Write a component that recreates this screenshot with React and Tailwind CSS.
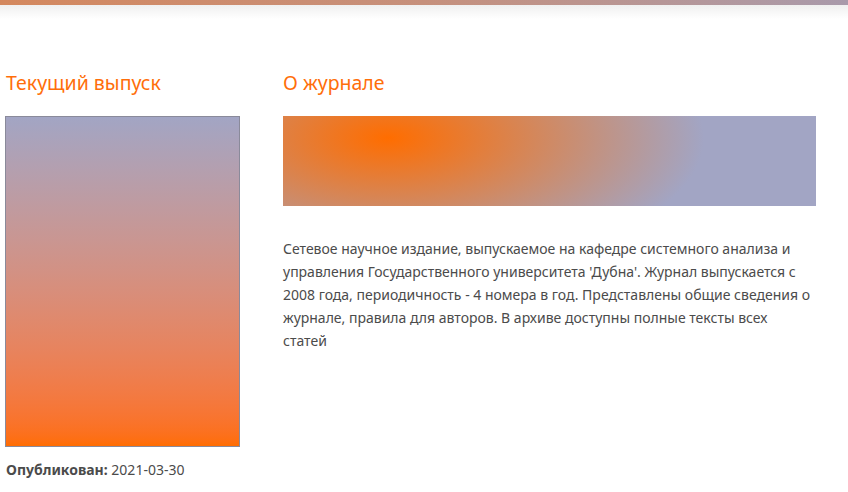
import React from 'react';

const App = () => {
  return (
    <div className="min-h-[492px] bg-white font-['Noto_Sans',sans-serif] text-[#4b4b4b]">
      {/* Верхняя полоса */}
      <div className="h-[5px] bg-gradient-to-r from-[#d4885e] via-[#c6907c] to-[#a99aab]" />
      <div className="h-[14px] bg-gradient-to-b from-[#f0f0f0] to-white" />

      <div className="flex pl-[5px] pt-[50px]">
        {/* Текущий выпуск */}
        <section className="w-[235px] shrink-0">
          <h2 className="pl-px text-[19.5px] leading-[28px] text-[#ff6e0a]">Текущий выпуск</h2>
          <div className="mt-[19px] h-[331px] w-[235px] border border-[#8a8a9a] bg-gradient-to-b from-[#a2a5c4] to-[#ff6d00]" />
          <p className="mt-[13px] pl-px text-[14px] leading-[20px]">
            <span className="font-bold">Опубликован:</span> 2021-03-30
          </p>
        </section>

        {/* О журнале */}
        <section className="ml-[43px] w-[533px]">
          <h2 className="text-[19.5px] leading-[28px] text-[#ff6e0a]">О журнале</h2>
          <div className="mt-[19px] h-[90px] w-full bg-[radial-gradient(316px_139px_at_105px_22px,#ff6d00_0%,#a2a5c4_100%)]" />
          <p className="mt-[31px] w-[529px] text-[14px] leading-[23px]">
            Сетевое научное издание, выпускаемое на кафедре системного анализа и управления Государственного университета 'Дубна'. Журнал выпускается с 2008 года, периодичность - 4 номера в год. Представлены общие сведения о журнале, правила для авторов. В архиве доступны полные тексты всех статей
          </p>
        </section>
      </div>
    </div>
  );
};

export default App;
